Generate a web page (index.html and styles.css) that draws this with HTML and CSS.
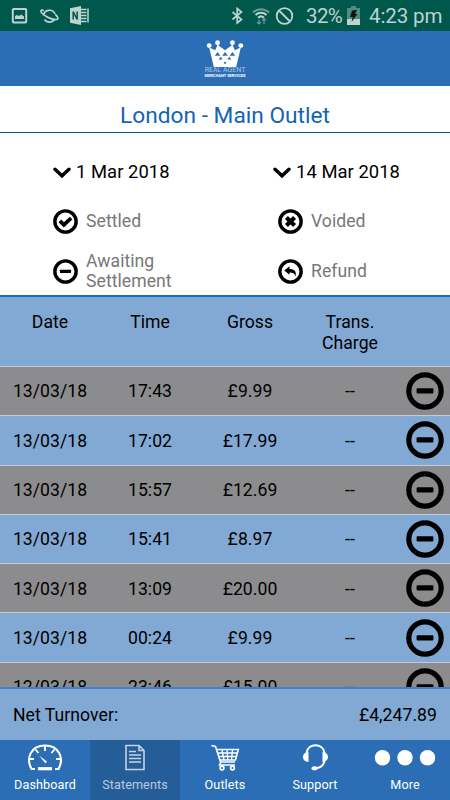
FILE: index.html
```html
<!DOCTYPE html>
<html lang="en">
<head>
	<meta charset="UTF-8">
	<title>Statements</title>
	<link rel="stylesheet" href="styles.css">
</head>
<body>
	<svg class="sprite">
		<symbol id="pending" viewBox="0 0 38 38">
			<circle cx="19" cy="19" r="16.2" fill="none" stroke="#000" stroke-width="5.2"/>
			<rect x="10.6" y="16.2" width="16.8" height="5.2" rx="1"/>
		</symbol>
		<symbol id="settled" viewBox="0 0 38 38">
			<circle cx="19" cy="19" r="16.2" fill="none" stroke="#000" stroke-width="5.2"/>
			<path d="M10.5 18l6 6L27.5 14" fill="none" stroke="#000" stroke-width="5.8"/>
		</symbol>
		<symbol id="voided" viewBox="0 0 38 38">
			<circle cx="19" cy="19" r="16.2" fill="none" stroke="#000" stroke-width="5.2"/>
			<path d="M12.8 12.8l12.4 12.4M25.2 12.8L12.8 25.2" fill="none" stroke="#000" stroke-width="6.4"/>
		</symbol>
		<symbol id="refund" viewBox="0 0 38 38">
			<circle cx="19" cy="19" r="16.2" fill="none" stroke="#000" stroke-width="5.2"/>
			<path d="M9.5 17.5l8-6.5v4.300c7 0 11 3.500 9.200 11.200-1.300-4.500-4-5.700-9.200-5.800V24z"/>
		</symbol>
		<symbol id="chevron" viewBox="0 0 18 12">
			<path d="M2 2.200L9 8.800l7-6.600" fill="none" stroke="#000" stroke-width="3.400" stroke-linecap="round"/>
		</symbol>
	</svg>

	<div class="status">
		<svg class="status-left" width="90" height="31" viewBox="0 0 90 31" fill="none" stroke="#bdd3cf">
			<rect x="12.8" y="9" width="13.4" height="13.4" rx="1" stroke-width="2"/>
			<path d="M15 19v-3l2-1 2 1 2.200-1.500L24 16.500V19z" fill="#bdd3cf" stroke="none"/>
			<path d="M43.500 15.500a6 6 0 0 1 11.500-1.500M44.500 19.500a6 6 0 0 0 10 0M43.800 10.500c-3-1-4 .5-1.500 3 4 3.800 10.500 6.500 14.500 6 2-.5 1-3-1.500-5" stroke-width="1.700"/>
			<path d="M70 8.200l11-2.200v19l-11-2.200z" fill="#bdd3cf" stroke="none"/>
			<path d="M81 9.500h5.500M81 12.500h5.500M81 15.500h5.500M81 18.500h5.500M81 21.500h5.500M88 8.500v14" stroke-width="1.500"/>
			<path d="M73.200 19.500v-8l4 8v-8" stroke="#00574b" stroke-width="1.500"/>
		</svg>
		<svg class="status-right" width="64" height="31" viewBox="0 0 64 31" fill="none" stroke="#bdd3cf">
			<path d="M2.500 12l9 7.500-4.300 3.500V8.500l4.300 3.500-9 7.500" stroke-width="1.700"/>
			<path d="M23 12.500a11.500 11.500 0 0 1 16 0" stroke="#6d9d96" stroke-width="2"/>
			<path d="M25.500 15a8 8 0 0 1 11 0M28 17.700a4.500 4.500 0 0 1 6 0" stroke-width="2"/>
			<path d="M29 19.500v4.500M27 22l2 2 2-2M34 24v-5M32 20.500l2-2 2 2" stroke="#6d9d96" stroke-width="1.200"/>
			<circle cx="54.500" cy="16" r="7.800" stroke-width="1.800"/>
			<path d="M49 10.500l11 11" stroke-width="1.800"/>
		</svg>
		<span class="percent">32%</span>
		<svg class="battery" width="13" height="20" viewBox="0 0 13 20">
			<path d="M0 2h4V0h5v2h4v11H0z" fill="#538b82"/>
			<path d="M0 13h13v6H0z" fill="#bdd3cf"/>
			<path d="M5 4.500l5-.5-2 4h2.500L4.500 16l1.300-5H3z" fill="#071a17"/>
		</svg>
		<span class="clock">4:23 pm</span>
	</div>

	<header class="header">
		<svg class="crown" width="38" height="27" viewBox="0 0 40 29">
			<path d="M3 8l6.500 3L12 5l8 6 8-6 2.500 6L37 8l-5 21H8z" fill="#fff"/>
			<g fill="#fff">
				<circle cx="3" cy="6" r="2.600"/>
				<circle cx="12" cy="3" r="2.600"/>
				<circle cx="28" cy="3" r="2.600"/>
				<circle cx="37" cy="6" r="2.600"/>
			</g>
			<path d="M9 17l3-4 3 4zM17 17l3-4 3 4zM25 17l3-4 3 4zM13 21l2.500-3 2 3zM22.500 21l2-3 2.500 3zM20 23l1.500 1.500L20 26l-1.500-1.500z" fill="#2b6eb6"/>
		</svg>
		<div class="brand">REAL AGENT</div>
		<div class="tagline">MERCHANT SERVICES</div>
	</header>

	<h1 class="outlet">London - Main Outlet</h1>

	<div class="dates">
		<div class="date"><svg width="18" height="12"><use href="#chevron"/></svg>1 Mar 2018</div>
		<div class="date"><svg width="18" height="12"><use href="#chevron"/></svg>14 Mar 2018</div>
	</div>

	<div class="legend">
		<div class="legend-item"><svg width="25" height="25"><use href="#settled"/></svg><span>Settled</span></div>
		<div class="legend-item"><svg width="25" height="25"><use href="#voided"/></svg><span>Voided</span></div>
		<div class="legend-item"><svg width="25" height="25"><use href="#pending"/></svg><span>Awaiting<br>Settlement</span></div>
		<div class="legend-item"><svg width="25" height="25"><use href="#refund"/></svg><span>Refund</span></div>
	</div>

	<main class="table">
		<div class="row head"><span>Date</span><span>Time</span><span>Gross</span><span>Trans.<br>Charge</span></div>
		<div class="row"><span>13/03/18</span><span>17:43</span><span>£9.99</span><span>--</span><svg width="38" height="38"><use href="#pending"/></svg></div>
		<div class="row"><span>13/03/18</span><span>17:02</span><span>£17.99</span><span>--</span><svg width="38" height="38"><use href="#pending"/></svg></div>
		<div class="row"><span>13/03/18</span><span>15:57</span><span>£12.69</span><span>--</span><svg width="38" height="38"><use href="#pending"/></svg></div>
		<div class="row"><span>13/03/18</span><span>15:41</span><span>£8.97</span><span>--</span><svg width="38" height="38"><use href="#pending"/></svg></div>
		<div class="row"><span>13/03/18</span><span>13:09</span><span>£20.00</span><span>--</span><svg width="38" height="38"><use href="#pending"/></svg></div>
		<div class="row"><span>13/03/18</span><span>00:24</span><span>£9.99</span><span>--</span><svg width="38" height="38"><use href="#pending"/></svg></div>
		<div class="row"><span>12/03/18</span><span>23:46</span><span>£15.00</span><span>--</span><svg width="38" height="38"><use href="#pending"/></svg></div>
	</main>

	<div class="total"><span>Net Turnover:</span><span>£4,247.89</span></div>

	<nav class="tabs">
		<a class="tab">
			<svg width="36" height="27" viewBox="0 0 36 27" fill="none" stroke="#fff">
				<path d="M8 25H4.500C-1.500 14 4 1.500 18 1.500S37.500 14 31.500 25H28" stroke-width="2.100"/>
				<path d="M18 2v5M8.500 5.500l3 3.500M27.500 5.500L24.500 9M2.500 15h4.500M33.500 15H29" stroke-width="1.900"/>
				<path d="M12 11.500l8 6-1.500 2z" fill="#fff" stroke="none"/>
				<path d="M11 24.700h14" stroke-width="3.200"/>
			</svg>
			Dashboard
		</a>
		<a class="tab active">
			<svg width="22" height="27" viewBox="0 0 22 27" fill="none" stroke="#c6d3e1">
				<path d="M2 1.500h13l5 5V25.500H2zM15 1.500v5h5" stroke-width="1.600"/>
				<path d="M5 7.500h7M5 11h12M5 14.500h12M5 18h12" stroke-width="1.300"/>
			</svg>
			Statements
		</a>
		<a class="tab">
			<svg width="29" height="27" viewBox="0 0 29 27" fill="none" stroke="#fff">
				<path d="M.5 1.500l4 1L9.500 18H24M5.500 5.500h21.800L24.500 16H9M10 18l-1.500 3H24" stroke-width="1.600"/>
				<path d="M7 9h19M8 12.500h17M11 6l2 10M16 6l.8 10M21.500 6l-1 10" stroke-width="1.400"/>
				<circle cx="11" cy="24" r="1.900" stroke-width="1.600"/>
				<circle cx="21.500" cy="24" r="1.900" stroke-width="1.600"/>
			</svg>
			Outlets
		</a>
		<a class="tab">
			<svg width="27" height="27" viewBox="0 0 27 27" fill="none" stroke="#fff">
				<path d="M4.500 9C6-1.500 21-1.500 22.500 9M22.500 17c-1 4-3.500 6.500-7.500 7" stroke-width="2"/>
				<path d="M6.500 8v10C2 17.500 1 15 1 13s1-4.500 5.500-5zM20.500 8v10c4.500-.5 5.500-3 5.500-5s-1-4.500-5.500-5z" fill="#fff" stroke="none"/>
				<ellipse cx="12.500" cy="24.200" rx="3" ry="2" fill="#fff" stroke="none"/>
			</svg>
			Support
		</a>
		<a class="tab">
			<svg width="62" height="27" viewBox="0 0 62 27" fill="#fff">
				<circle cx="8.500" cy="13.700" r="7.700"/>
				<circle cx="31" cy="13.700" r="7.700"/>
				<circle cx="53.500" cy="13.700" r="7.700"/>
			</svg>
			More
		</a>
	</nav>
</body>
</html>
```

FILE: styles.css
```css
* {
	box-sizing: border-box;
}

body {
	margin: 0;
	height: 800px;
	display: flex;
	flex-direction: column;
	overflow: hidden;
	background: #fff;
	color: #000;
	font-family: Roboto, sans-serif;
	font-size: 17.6px;
	line-height: 20.5px;
	letter-spacing: 0.05px;
}

svg {
	display: block;
	flex: none;
}

.sprite {
	display: none;
}

/* android status bar */
.status {
	flex: none;
	display: flex;
	align-items: center;
	height: 31px;
	background: #00574b;
	color: #bdd3cf;
	font-size: 20.5px;
	letter-spacing: -0.1px;
}

.status-right {
	margin-left: 140px;
}

.percent {
	width: 41px;
	margin-left: 12px;
	padding-top: 1px;
	letter-spacing: -0.6px;
}

.clock {
	margin-left: 9px;
	padding-top: 1px;
	white-space: nowrap;
}

.header {
	flex: none;
	display: flex;
	flex-direction: column;
	align-items: center;
	height: 55px;
	padding-top: 9px;
	background: #2b6eb6;
	color: #fff;
	letter-spacing: 0;
}

.brand {
	color: #a9c6e5;
	font-size: 7px;
	line-height: 7px;
}

.tagline {
	font-size: 4px;
	line-height: 4px;
	font-weight: bold;
}

.outlet {
	flex: none;
	height: 47px;
	margin: 0;
	padding-top: 16px;
	border-bottom: 1px solid #0f52a5;
	color: #1464b4;
	font-size: 22.7px;
	font-weight: normal;
	line-height: 27px;
	letter-spacing: 0;
	text-align: center;
}

.dates {
	flex: none;
	display: grid;
	grid-template-columns: 220px 1fr;
	height: 63px;
	padding: 29px 0 0 53px;
	font-size: 18.4px;
}

.date {
	display: flex;
	align-items: center;
	gap: 5px;
	height: 21px;
}

.legend {
	flex: none;
	display: grid;
	grid-template-columns: 225px 1fr;
	grid-template-rows: 50px 50px;
	height: 99px;
	padding-left: 53px;
	color: #777;
}

.legend-item {
	display: flex;
	align-items: center;
	gap: 8px;
}

.table {
	flex: 1;
	min-height: 0;
	overflow: hidden;
	border-top: 2px solid #1270c4;
}

.row {
	display: grid;
	grid-template-columns: repeat(4, 100px) 50px;
	align-items: center;
	justify-items: center;
	height: 49.3px;
	border-top: 1px solid #c4cbd3;
	background: #82a8d4;
	text-align: center;
}

.row span {
	padding-top: 1px;
}

.row:nth-child(even) {
	background: #8c8c8e;
}

.row.head {
	align-items: start;
	height: 69px;
	padding-top: 14px;
	border-top: none;
}

.total {
	flex: none;
	display: flex;
	align-items: center;
	justify-content: space-between;
	height: 53px;
	padding: 1px 13px 0;
	border-top: 2px solid #4580c8;
	background: #82a8d4;
}

.tabs {
	flex: none;
	display: grid;
	grid-template-columns: repeat(5, 1fr);
	height: 60px;
	background: #2b6eb6;
}

.tab {
	display: flex;
	flex-direction: column;
	align-items: center;
	gap: 5px;
	padding-top: 4px;
	color: #fff;
	font-size: 12.6px;
	line-height: 17px;
	letter-spacing: 0.1px;
}

.tab.active {
	background: #255d98;
	color: #b9cbdf;
}
```
